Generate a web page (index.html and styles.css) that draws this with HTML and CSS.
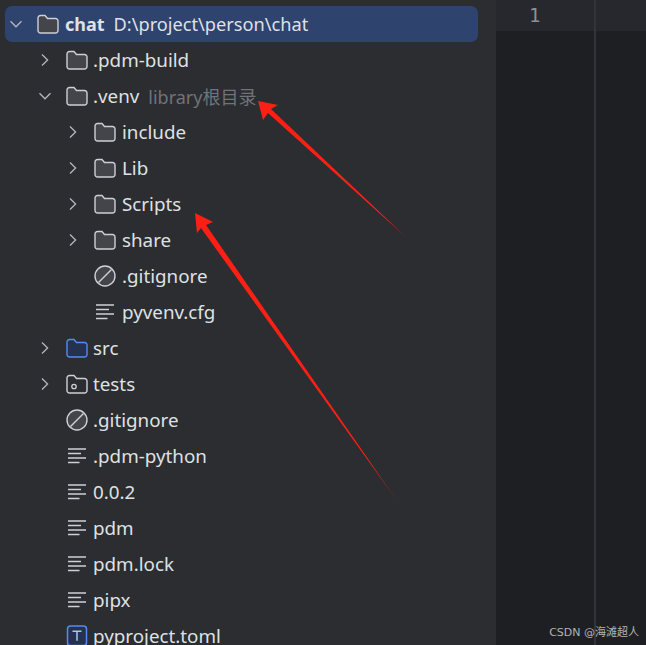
FILE: index.html
```html
<!DOCTYPE html>
<html lang="zh">
<head>
<meta charset="utf-8">
<title>chat</title>
<link rel="stylesheet" href="styles.css">
</head>
<body>
<svg width="0" height="0" class="defs">
  <defs>
    <symbol id="i-open" viewBox="0 0 14 14"><path d="M1.500 4.200 7 9.800l5.500-5.600" fill="none" stroke="#b4b8bf" stroke-width="1.300"/></symbol>
    <symbol id="i-closed" viewBox="0 0 14 14"><path d="M4 1.500 9.600 7 4 12.500" fill="none" stroke="#b4b8bf" stroke-width="1.300"/></symbol>
    <symbol id="i-folder" viewBox="0 0 22 22"><path d="M1 5A2.500 2.500 0 0 1 3.500 2.500H8l2.500 3H18.500A2.500 2.500 0 0 1 21 8V17.500A2.500 2.500 0 0 1 18.500 20H3.500A2.500 2.500 0 0 1 1 17.500Z" fill="#43454a" stroke="#ced0d6" stroke-width="1.400"/></symbol>
    <symbol id="i-src" viewBox="0 0 22 22"><path d="M1 5A2.500 2.500 0 0 1 3.500 2.500H8l2.500 3H18.500A2.500 2.500 0 0 1 21 8V17.500A2.500 2.500 0 0 1 18.500 20H3.500A2.500 2.500 0 0 1 1 17.500Z" fill="#25324d" stroke="#548af7" stroke-width="1.400"/></symbol>
    <symbol id="i-tests" viewBox="0 0 22 22"><path d="M1 5A2.500 2.500 0 0 1 3.500 2.500H8l2.500 3H18.500A2.500 2.500 0 0 1 21 8V17.500A2.500 2.500 0 0 1 18.500 20H3.500A2.500 2.500 0 0 1 1 17.500Z" fill="#2b2d30" stroke="#ced0d6" stroke-width="1.400"/><circle cx="8" cy="13.500" r="2.200" fill="none" stroke="#ced0d6" stroke-width="1.300"/></symbol>
    <symbol id="i-ignore" viewBox="0 0 22 22"><circle cx="11" cy="11" r="10" fill="#43454a" stroke="#ced0d6" stroke-width="1.400"/><path d="M4.500 17.500 17.500 4.500" stroke="#ced0d6" stroke-width="1.400"/></symbol>
    <symbol id="i-text" viewBox="0 0 22 22"><path d="M2 4H20M2 8.500H15M2 13H20M2 17.500H13.500" fill="none" stroke="#ced0d6" stroke-width="1.400"/></symbol>
    <symbol id="i-toml" viewBox="0 0 22 22"><rect x="1.500" y="1" width="19" height="19.500" rx="3" fill="#25324d" stroke="#548af7" stroke-width="1.500"/><path d="M6.500 6.300H15.500M11 6.300V15.800" fill="none" stroke="#a8c4fb" stroke-width="1.500"/></symbol>
    <linearGradient id="fade1" gradientUnits="userSpaceOnUse" x1="258" y1="101" x2="407" y2="238"><stop offset=".85" stop-color="#fc1f14"/><stop offset="1" stop-color="#6e2a26"/></linearGradient>
    <linearGradient id="fade2" gradientUnits="userSpaceOnUse" x1="195" y1="213" x2="399" y2="503"><stop offset=".85" stop-color="#fc1f14"/><stop offset="1" stop-color="#6e2a26"/></linearGradient>
  </defs>
</svg>
<main class="window">
  <nav class="tree">
    <div class="row root depth-0"><svg class="chev"><use href="#i-open"/></svg><svg class="icon"><use href="#i-folder"/></svg><span class="name strong">chat</span><span class="path">D:\project\person\chat</span></div>
    <div class="row depth-1"><svg class="chev"><use href="#i-closed"/></svg><svg class="icon"><use href="#i-folder"/></svg><span class="name">.pdm-build</span></div>
    <div class="row depth-1"><svg class="chev"><use href="#i-open"/></svg><svg class="icon"><use href="#i-folder"/></svg><span class="name">.venv</span><span class="hint">library根目录</span></div>
    <div class="row depth-2"><svg class="chev"><use href="#i-closed"/></svg><svg class="icon"><use href="#i-folder"/></svg><span class="name">include</span></div>
    <div class="row depth-2"><svg class="chev"><use href="#i-closed"/></svg><svg class="icon"><use href="#i-folder"/></svg><span class="name">Lib</span></div>
    <div class="row depth-2"><svg class="chev"><use href="#i-closed"/></svg><svg class="icon"><use href="#i-folder"/></svg><span class="name">Scripts</span></div>
    <div class="row depth-2"><svg class="chev"><use href="#i-closed"/></svg><svg class="icon"><use href="#i-folder"/></svg><span class="name">share</span></div>
    <div class="row depth-2"><span class="chev"></span><svg class="icon"><use href="#i-ignore"/></svg><span class="name">.gitignore</span></div>
    <div class="row depth-2"><span class="chev"></span><svg class="icon"><use href="#i-text"/></svg><span class="name">pyvenv.cfg</span></div>
    <div class="row depth-1"><svg class="chev"><use href="#i-closed"/></svg><svg class="icon"><use href="#i-src"/></svg><span class="name">src</span></div>
    <div class="row depth-1"><svg class="chev"><use href="#i-closed"/></svg><svg class="icon"><use href="#i-tests"/></svg><span class="name">tests</span></div>
    <div class="row depth-1"><span class="chev"></span><svg class="icon"><use href="#i-ignore"/></svg><span class="name">.gitignore</span></div>
    <div class="row depth-1"><span class="chev"></span><svg class="icon"><use href="#i-text"/></svg><span class="name">.pdm-python</span></div>
    <div class="row depth-1"><span class="chev"></span><svg class="icon"><use href="#i-text"/></svg><span class="name">0.0.2</span></div>
    <div class="row depth-1"><span class="chev"></span><svg class="icon"><use href="#i-text"/></svg><span class="name">pdm</span></div>
    <div class="row depth-1"><span class="chev"></span><svg class="icon"><use href="#i-text"/></svg><span class="name">pdm.lock</span></div>
    <div class="row depth-1"><span class="chev"></span><svg class="icon"><use href="#i-text"/></svg><span class="name">pipx</span></div>
    <div class="row depth-1"><span class="chev"></span><svg class="icon"><use href="#i-toml"/></svg><span class="name">pyproject.toml</span></div>
  </nav>
  <section class="editor">
    <div class="gutter"><div class="line-no">1</div></div>
    <div class="code"><div class="caret-line"></div></div>
  </section>
  <svg class="arrows" viewBox="0 0 646 645" width="646" height="645">
    <path d="M258 101 278 105 271 109 408 239 268 113 263 120Z" fill="url(#fade1)"/>
    <path d="M195 213 213 222 206 225 400 505 201 228 197 233Z" fill="url(#fade2)"/>
  </svg>
  <div class="watermark">CSDN @海滩超人</div>
</main>
</body>
</html>
```
FILE: styles.css
```css
* { box-sizing: border-box; }
html, body { margin: 0; padding: 0; background: #1e1f22; }
.defs { position: absolute; }
.window {
  position: relative;
  display: flex;
  width: 646px;
  height: 645px;
  overflow: hidden;
  font-family: "Noto Sans", "Noto Sans CJK SC", sans-serif;
  color: #dfe1e5;
}
.tree {
  flex: 0 0 496px;
  height: 645px;
  padding-top: 6px;
  background: #2b2d30;
  overflow: hidden;
  font-size: 18.800px;
}
.row {
  display: flex;
  align-items: center;
  height: 36px;
  white-space: nowrap;
}
.root {
  width: 473px;
  margin-left: 5px;
  border-radius: 7px;
  background: #2e436e;
}
.depth-0 { padding-left: 4px; }
.depth-1 { padding-left: 38px; }
.depth-2 { padding-left: 66px; }
.chev { flex: 0 0 14px; width: 14px; height: 14px; margin-right: 14px; }
.icon { flex: 0 0 22px; width: 22px; height: 22px; margin-right: 5px; }
.depth-0 .icon, .depth-2 .icon { margin-right: 6px; }
.strong { font-size: 18px; font-weight: 700; }
.path { margin-left: 9px; font-size: 18.200px; }
.hint { margin-left: 9px; font-size: 18px; color: #6f737a; }
.editor { flex: 1; display: flex; }
.gutter {
  flex: 0 0 100px;
  border-right: 2px solid #313438;
}
.line-no {
  height: 31px;
  padding-left: 33px;
  background: #26282e;
  color: #8c8f96;
  font-family: "DejaVu Sans Mono", monospace;
  font-size: 19px;
  line-height: 31px;
}
.code { flex: 1; }
.caret-line { height: 31px; background: #26282e; }
.arrows { position: absolute; left: 0; top: 0; pointer-events: none; }
.watermark {
  position: absolute;
  right: 7px;
  bottom: 5px;
  font-family: "DejaVu Sans", "Noto Sans CJK SC", sans-serif;
  font-size: 11px;
  line-height: 14px;
  color: #b3b3b3;
}
```
